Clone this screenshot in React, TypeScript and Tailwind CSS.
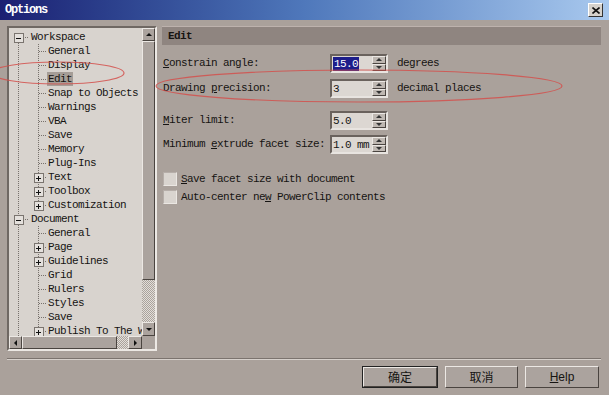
import React from "react";

type Item = { label: string; level: 0 | 1; box?: "+" | "-"; selected?: boolean };

const items: Item[] = [
  { label: "Workspace", level: 0, box: "-" },
  { label: "General", level: 1 },
  { label: "Display", level: 1 },
  { label: "Edit", level: 1, selected: true },
  { label: "Snap to Objects", level: 1 },
  { label: "Warnings", level: 1 },
  { label: "VBA", level: 1 },
  { label: "Save", level: 1 },
  { label: "Memory", level: 1 },
  { label: "Plug-Ins", level: 1 },
  { label: "Text", level: 1, box: "+" },
  { label: "Toolbox", level: 1, box: "+" },
  { label: "Customization", level: 1, box: "+" },
  { label: "Document", level: 0, box: "-" },
  { label: "General", level: 1 },
  { label: "Page", level: 1, box: "+" },
  { label: "Guidelines", level: 1, box: "+" },
  { label: "Grid", level: 1 },
  { label: "Rulers", level: 1 },
  { label: "Styles", level: 1 },
  { label: "Save", level: 1 },
  { label: "Publish To The Web", level: 1, box: "+" },
];

const rowC = (i: number) => 9.5 + i * 14;

function TreeLines() {
  const dot = { stroke: "#77716c", strokeDasharray: "1 1", strokeWidth: 1 };
  const els: React.ReactNode[] = [];
  // root vertical
  els.push(<line key="rv1" x1={9.5} y1={rowC(0) + 5} x2={9.5} y2={rowC(13) - 5} {...dot} />);
  els.push(<line key="rv2" x1={9.5} y1={rowC(13) + 5} x2={9.5} y2={310} {...dot} />);
  // child verticals
  els.push(<line key="cv1" x1={29.5} y1={rowC(0) + 6} x2={29.5} y2={rowC(12)} {...dot} />);
  els.push(<line key="cv2" x1={29.5} y1={rowC(13) + 6} x2={29.5} y2={310} {...dot} />);
  items.forEach((it, i) => {
    const c = rowC(i);
    if (it.level === 0) {
      els.push(<line key={"s" + i} x1={14} y1={c} x2={20} y2={c} {...dot} />);
      els.push(<rect key={"b" + i} x={5} y={c - 4} width={9} height={9} fill="#e4e0dc" stroke="#7a746f" strokeWidth={1} strokeDasharray="none" />);
      els.push(<line key={"m" + i} x1={7} y1={c + 0.5} x2={12} y2={c + 0.5} stroke="#111" strokeWidth={1} />);
    } else {
      if (it.box) {
        els.push(<line key={"s" + i} x1={34} y1={c} x2={38} y2={c} {...dot} />);
        els.push(<rect key={"b" + i} x={25} y={c - 4} width={9} height={9} fill="#e4e0dc" stroke="#7a746f" strokeWidth={1} />);
        els.push(<line key={"m" + i} x1={27} y1={c + 0.5} x2={32} y2={c + 0.5} stroke="#111" strokeWidth={1} />);
        els.push(<line key={"v" + i} x1={29.5} y1={c - 2} x2={29.5} y2={c + 3} stroke="#111" strokeWidth={1} />);
      } else {
        els.push(<line key={"s" + i} x1={30} y1={c} x2={38} y2={c} {...dot} />);
      }
    }
  });
  return (
    <svg className="absolute left-0 top-0" width={133} height={308} shapeRendering="crispEdges">
      {els}
    </svg>
  );
}

function Arrow({ dir }: { dir: "up" | "down" | "left" | "right" }) {
  const pts =
    dir === "up" ? "1,4 7,4 4,1" : dir === "down" ? "1,1 7,1 4,4" : dir === "left" ? "4,1 4,7 1,4" : "1,1 1,7 4,4";
  const w = dir === "up" || dir === "down" ? 8 : 5;
  const h = dir === "up" || dir === "down" ? 5 : 8;
  return (
    <svg width={w} height={h}>
      <polygon points={pts} fill="#111" />
    </svg>
  );
}

const raised =
  "border border-t-[#ece8e4] border-l-[#ece8e4] border-b-[#4a4440] border-r-[#4a4440] bg-[#aba39e]";
const dither =
  "bg-[repeating-conic-gradient(#e2ded9_0%_25%,#aaa29c_0%_50%)] bg-[length:2px_2px]";

function Spin() {
  return (
    <div className="flex flex-col w-[14px] h-full">
      <div className={`flex-1 flex items-center justify-center ${raised} bg-[#bfb8b2]`}>
        <svg width={6} height={3}>
          <polygon points="0,3 6,3 3,0" fill="#333" />
        </svg>
      </div>
      <div className={`flex-1 flex items-center justify-center ${raised} bg-[#bfb8b2]`}>
        <svg width={6} height={3}>
          <polygon points="0,0 6,0 3,3" fill="#333" />
        </svg>
      </div>
    </div>
  );
}

function Field({ value, selected }: { value: string; selected?: boolean }) {
  return (
    <div className="flex w-[58px] h-[19px] border-2 border-t-[#6a625d] border-l-[#6a625d] border-b-[#e8e4e0] border-r-[#e8e4e0] bg-[#dcd7d2]">
      <div className="flex-1 flex items-center pl-[1px]">
        {selected ? (
          <span className="bg-[#1d1d8a] text-white px-[1px] leading-[14px]">{value}</span>
        ) : (
          <span className="leading-[14px]">{value}</span>
        )}
      </div>
      <Spin />
    </div>
  );
}

function U({ children }: { children: React.ReactNode }) {
  return <span className="underline underline-offset-[1px]">{children}</span>;
}

function Row({ label, value, unit, selected, mt }: { label: React.ReactNode; value: string; unit?: string; selected?: boolean; mt: string }) {
  return (
    <div className={`flex items-center h-[19px] ${mt}`}>
      <div className="w-[167px]">{label}</div>
      <Field value={value} selected={selected} />
      {unit && <div className="ml-[9px]">{unit}</div>}
    </div>
  );
}

function Check({ children, mt }: { children: React.ReactNode; mt: string }) {
  return (
    <div className={`flex items-center h-[14px] ${mt}`}>
      <div className="w-[14px] h-[14px] bg-[#d9d4cf] border border-t-[#b6aea9] border-l-[#b6aea9] border-b-[#ebe7e3] border-r-[#ebe7e3]" />
      <div className="ml-[4px]">{children}</div>
    </div>
  );
}

function Btn({ children, w, def }: { children: React.ReactNode; w: string; def?: boolean }) {
  return (
    <div className={`${w} h-[22px] ${def ? "border border-[#222]" : ""}`}>
      <div className={`w-full h-full flex items-center justify-center ${raised} bg-[#aaa19b] font-['Noto_Sans_CJK_SC','Liberation_Sans',sans-serif] text-[12px] tracking-normal`}>
        {children}
      </div>
    </div>
  );
}

export default function App() {
  return (
    <div className="relative w-[609px] h-[395px] overflow-hidden bg-[#aaa19b] text-[#161412] font-['Liberation_Mono',monospace] text-[11px] tracking-[-0.6px]">
      {/* title bar */}
      <div className="h-[20px] flex items-center justify-between pl-[5px] pr-[6px] bg-linear-to-r from-[#1c1f72] via-[#4f78bb] to-[#a9c9ee]">
        <span className="text-white font-bold text-[12px] tracking-[-1.2px]">Options</span>
        <div className="w-[15px] h-[14px] flex items-center justify-center bg-[#d6d2cc] border border-t-white border-l-white border-b-[#333] border-r-[#333]">
          <svg width={8} height={7}>
            <path d="M0.5 0.5 L7.5 6.5 M7.5 0.5 L0.5 6.5" stroke="#111" strokeWidth={1.6} />
          </svg>
        </div>
      </div>

      {/* body */}
      <div className="flex pl-[7px] pt-[6px]">
        {/* tree panel */}
        <div className="w-[150px] h-[325px] border-2 border-t-[#6f6863] border-l-[#6f6863] border-b-[#ece8e4] border-r-[#ece8e4] bg-[#d8d3ce] grid grid-cols-[133px_13px] grid-rows-[308px_13px]">
          <div className="relative overflow-hidden pt-[2px]">
            <TreeLines />
            {items.map((it, i) => (
              <div
                key={i}
                className={`relative h-[14px] flex items-center whitespace-nowrap ${it.level === 0 ? "pl-[21px]" : "pl-[38px]"}`}
              >
                <span className={`px-[1px] leading-[14px] ${it.selected ? "bg-[#a59d97]" : ""}`}>{it.label}</span>
              </div>
            ))}
          </div>
          {/* vertical scrollbar */}
          <div className="flex flex-col">
            <div className={`h-[13px] flex items-center justify-center ${raised}`}>
              <Arrow dir="up" />
            </div>
            <div className={`h-[239px] ${raised} border-b-[#3a3430]`} />
            <div className={`flex-1 ${dither}`} />
            <div className={`h-[14px] flex items-center justify-center ${raised}`}>
              <Arrow dir="down" />
            </div>
          </div>
          {/* horizontal scrollbar */}
          <div className="flex">
            <div className={`w-[13px] flex items-center justify-center ${raised}`}>
              <Arrow dir="left" />
            </div>
            <div className={`w-[95px] ${raised}`} />
            <div className={`flex-1 ${dither}`} />
            <div className={`w-[14px] flex items-center justify-center ${raised}`}>
              <Arrow dir="right" />
            </div>
          </div>
          <div className="bg-[#aaa29d]" />
        </div>

        {/* right panel */}
        <div className="flex flex-col w-[439px] ml-[5px]">
          <div className="h-[19px] flex items-center pl-[6px] bg-[#8f8580] border-t border-t-[#bdb2ad] font-bold">
            Edit
          </div>
          <div className="flex flex-col pl-[1px] pt-[9px]">
            <Row
              mt=""
              label={<><U>C</U>onstrain angle:</>}
              value="15.0"
              selected
              unit="degrees"
            />
            <Row
              mt="mt-[6px]"
              label={<>Drawing <U>p</U>recision:</>}
              value="3"
              unit="decimal places"
            />
            <Row mt="mt-[13px]" label={<><U>M</U>iter limit:</>} value="5.0" />
            <Row mt="mt-[5px]" label={<>Minimum <U>e</U>xtrude facet size:</>} value="1.0 mm" />
            <Check mt="mt-[18px]">
              <U>S</U>ave facet size with document
            </Check>
            <Check mt="mt-[4px]">
              Auto-center ne<U>w</U> PowerClip contents
            </Check>
          </div>
        </div>
      </div>

      {/* separator */}
      <div className="mt-[7px] ml-[7px] mr-[8px] h-[2px] border-t border-t-[#7b736e] border-b border-b-[#d6d0cb]" />

      {/* buttons */}
      <div className="flex justify-end gap-[7px] pr-[10px] mt-[6px]">
        <Btn w="w-[76px]" def>
          确定
        </Btn>
        <Btn w="w-[73px]">取消</Btn>
        <Btn w="w-[74px]">
          <span className="font-['Liberation_Sans',sans-serif]">
            <span className="underline">H</span>elp
          </span>
        </Btn>
      </div>

      {/* red annotation ellipses */}
      <svg className="absolute left-0 top-0 pointer-events-none" width={609} height={395}>
        <ellipse cx={58} cy={73} rx={66} ry={11} fill="none" stroke="#d4504c" strokeWidth={1.2} opacity={0.85} />
        <ellipse cx={359} cy={86} rx={203} ry={16} fill="none" stroke="#d4504c" strokeWidth={1.2} opacity={0.85} />
      </svg>
    </div>
  );
}
